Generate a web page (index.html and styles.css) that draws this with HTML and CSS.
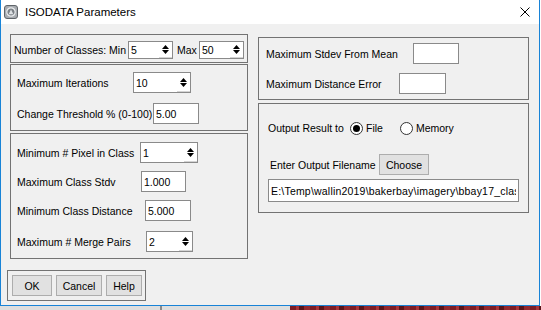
FILE: index.html
```html
<!DOCTYPE html>
<html lang="en">

<head>
    <meta charset="UTF-8">
    <title>ISODATA Parameters</title>
    <link rel="stylesheet" href="styles.css">
</head>

<body>
    <div class="window">
        <div class="titlebar">
            <svg class="app-icon" viewBox="0 0 14 14">
                <rect x="0.5" y="0.5" width="13" height="13" rx="2.5" fill="#a7abb0" stroke="#60656a"/>
                <circle cx="7" cy="7" r="4.2" fill="#7b8086" stroke="#eceef0" stroke-width="1.2"/>
                <path d="M4.6 9.2 L7 4.6 L9.4 9.2 Z" fill="#dfe2e5"/>
            </svg>
            <span class="title">ISODATA Parameters</span>
            <svg class="close" viewBox="0 0 10 10">
                <path d="M0.5 0.5 L9.5 9.5 M9.5 0.5 L0.5 9.5" stroke="#000" stroke-width="1"/>
            </svg>
        </div>

        <div class="content">
            <!-- left side: class settings -->
            <div class="col-left">
                <div class="panel p-classes">
                    <label class="lbl w-114">Number of Classes: Min</label>
                    <div class="spin w-45">
                        <input type="text" value="5">
                        <span class="arrows"><svg viewBox="0 0 7 9"><path d="M0 4 L3.5 0 L7 4 Z M0 5 L7 5 L3.5 9 Z"/></svg></span>
                    </div>
                    <label class="lbl lbl-max">Max</label>
                    <div class="spin w-45">
                        <input type="text" value="50">
                        <span class="arrows"><svg viewBox="0 0 7 9"><path d="M0 4 L3.5 0 L7 4 Z M0 5 L7 5 L3.5 9 Z"/></svg></span>
                    </div>
                </div>

                <div class="panel p-iter">
                    <div class="row">
                        <label class="lbl w-116">Maximum Iterations</label>
                        <div class="spin w-58">
                            <input type="text" value="10">
                            <span class="arrows"><svg viewBox="0 0 7 9"><path d="M0 4 L3.5 0 L7 4 Z M0 5 L7 5 L3.5 9 Z"/></svg></span>
                        </div>
                    </div>
                    <div class="row row-gap-10">
                        <label class="lbl w-136">Change Threshold % (0-100)</label>
                        <input class="field w-46" type="text" value="5.00">
                    </div>
                </div>

                <div class="panel p-pixel">
                    <div class="row">
                        <label class="lbl w-123">Minimum # Pixel in Class</label>
                        <div class="spin w-58">
                            <input type="text" value="1">
                            <span class="arrows"><svg viewBox="0 0 7 9"><path d="M0 4 L3.5 0 L7 4 Z M0 5 L7 5 L3.5 9 Z"/></svg></span>
                        </div>
                    </div>
                    <div class="row">
                        <label class="lbl w-124">Maximum Class Stdv</label>
                        <input class="field w-45" type="text" value="1.000">
                    </div>
                    <div class="row">
                        <label class="lbl w-128">Minimum Class Distance</label>
                        <input class="field w-46" type="text" value="5.000">
                    </div>
                    <div class="row row-gap-10">
                        <label class="lbl w-129">Maximum # Merge Pairs</label>
                        <div class="spin w-47">
                            <input type="text" value="2">
                            <span class="arrows"><svg viewBox="0 0 7 9"><path d="M0 4 L3.5 0 L7 4 Z M0 5 L7 5 L3.5 9 Z"/></svg></span>
                        </div>
                    </div>
                </div>

                <div class="panel p-buttons">
                    <button class="btn w-40">OK</button>
                    <button class="btn w-46">Cancel</button>
                    <button class="btn w-36">Help</button>
                </div>
            </div>

            <!-- right side: limits and output -->
            <div class="col-right">
                <div class="panel p-stdev">
                    <div class="row">
                        <label class="lbl w-147">Maximum Stdev From Mean</label>
                        <input class="field w-46" type="text" value="">
                    </div>
                    <div class="row row-gap-9">
                        <label class="lbl w-133">Maximum Distance Error</label>
                        <input class="field w-47" type="text" value="">
                    </div>
                </div>

                <div class="panel p-output">
                    <div class="row row-radio">
                        <label class="lbl w-82">Output Result to</label>
                        <span class="radio checked"><span class="dot"></span>File</span>
                        <span class="radio"><span class="dot"></span>Memory</span>
                    </div>
                    <div class="row row-choose">
                        <label class="lbl w-109">Enter Output Filename</label>
                        <button class="btn w-50">Choose</button>
                    </div>
                    <div class="row row-file">
                        <input class="field filename" type="text" value="E:\Temp\wallin2019\bakerbay\imagery\bbay17_class.img">
                    </div>
                </div>
            </div>
        </div>
    </div>
    <div class="strip">
        <div class="strip-left"></div>
        <div class="strip-right"></div>
    </div>
</body>

</html>
```

FILE: styles.css
```css
* {
    box-sizing: border-box;
}

body {
    margin: 0;
    background-color: #fff;
    font-family: "Liberation Sans", Arial, sans-serif;
    font-size: 10.5px;
    color: #000;
}

.window {
    width: 540px;
    height: 306px;
    background-color: #f0f0f0;
    border: 1px solid #1883d7;
    border-top: none;
    display: flex;
    flex-direction: column;
}

/* title bar */
.titlebar {
    height: 24px;
    flex-shrink: 0;
    background-color: #fff;
    display: flex;
    align-items: center;
    padding-bottom: 1px;
}

.app-icon {
    width: 14px;
    height: 14px;
    margin-left: 3px;
}

.title {
    margin-left: 7px;
    font-size: 11.5px;
}

.close {
    width: 10px;
    height: 10px;
    margin-left: auto;
    margin-right: 9px;
}

/* columns */
.content {
    display: flex;
    padding-left: 9px;
}

.col-left {
    width: 238px;
    padding-top: 10px;
    display: flex;
    flex-direction: column;
}

.col-right {
    width: 271px;
    margin-left: 10px;
    padding-top: 13px;
    display: flex;
    flex-direction: column;
}

.panel {
    border: 1px solid #737373;
}

.p-classes {
    height: 29px;
    display: flex;
    align-items: flex-start;
    padding: 6px 0 0 3px;
}

.p-classes .spin {
    height: 18px;
}

.p-classes .lbl {
    line-height: 18px;
}

.p-iter {
    height: 67px;
    margin-top: 1px;
    padding: 7px 0 0 6px;
}

.p-pixel {
    height: 126px;
    margin-top: 2px;
    padding: 8px 0 0 6px;
}

.p-buttons {
    width: 139px;
    height: 31px;
    margin-top: 11px;
    margin-left: -3px;
    padding: 4px 0 0 4px;
    display: flex;
    gap: 4px;
}

.p-stdev {
    height: 63px;
    padding: 5px 0 0 7px;
}

.p-output {
    height: 110px;
    margin-top: 3px;
    padding: 17px 0 0 9px;
}

/* rows */
.row {
    display: flex;
    align-items: center;
    height: 21px;
}

.row + .row {
    margin-top: 8px;
}

.row + .row-gap-9 {
    margin-top: 9px;
}

.row + .row-gap-10 {
    margin-top: 10px;
}

.lbl {
    flex-shrink: 0;
    white-space: nowrap;
}

.lbl-max {
    margin-left: 4px;
    width: 22px;
}

/* widths used by labels and boxes */
.w-36 { width: 36px; }
.w-40 { width: 40px; }
.w-45 { width: 45px; }
.w-46 { width: 46px; }
.w-47 { width: 47px; }
.w-50 { width: 50px; }
.w-58 { width: 58px; }
.w-82 { width: 82px; }
.w-109 { width: 109px; }
.w-114 { width: 114px; }
.w-116 { width: 116px; }
.w-123 { width: 123px; }
.w-124 { width: 124px; }
.w-128 { width: 128px; }
.w-129 { width: 129px; }
.w-133 { width: 133px; }
.w-136 { width: 136px; }
.w-147 { width: 147px; }

/* inputs */
.field,
.spin input {
    font-family: inherit;
    font-size: 10.5px;
    color: #000;
    margin: 0;
    outline: none;
}

.field {
    height: 100%;
    border: 1px solid #8a8a8a;
    background-color: #fff;
    padding: 0 2px;
}

.spin {
    height: 100%;
    display: flex;
    border: 1px solid #8a8a8a;
    background-color: #fff;
}

.spin input {
    flex: 1;
    min-width: 0;
    border: none;
    padding: 0 2px;
    background: transparent;
}

.arrows {
    width: 13px;
    display: flex;
    align-items: center;
    justify-content: center;
    border-bottom: 1px solid #d4d4d4;
}

.arrows svg {
    width: 7px;
    height: 9px;
    fill: #000;
}

/* buttons */
.btn {
    height: 21px;
    padding: 0;
    font-family: inherit;
    font-size: 10.5px;
    color: #000;
    background-color: #e1e1e1;
    border: 1px solid #adadad;
}

/* output section */
.row-radio {
    height: 14px;
}

.row + .row-choose {
    margin-top: 19px;
}

.row-choose .lbl {
    margin-left: 2px;
}

.row + .row-file {
    margin-top: 4px;
    height: 23px;
}

.filename {
    width: 251px;
    letter-spacing: 0.2px;
}

.radio {
    display: inline-flex;
    align-items: center;
    gap: 3px;
    white-space: nowrap;
}

.radio + .radio {
    margin-left: 17px;
}

.dot {
    width: 13px;
    height: 13px;
    border: 1px solid #333;
    border-radius: 50%;
    background-color: #fff;
    display: flex;
    align-items: center;
    justify-content: center;
}

.radio.checked .dot::after {
    content: "";
    width: 7px;
    height: 7px;
    border-radius: 50%;
    background-color: #000;
}

/* bit of the desktop below the dialog */
.strip {
    display: flex;
    height: 4px;
}

.strip-left {
    width: 290px;
    background: linear-gradient(to right, #dedede 0 160px, #8a8a8a 160px 162px, #dedede 162px);
}

.strip-right {
    flex: 1;
    background: repeating-linear-gradient(to right, #7d1e25 0 6px, #a8343a 6px 9px, #5b1519 9px 14px, #93282e 14px 20px);
}
```
